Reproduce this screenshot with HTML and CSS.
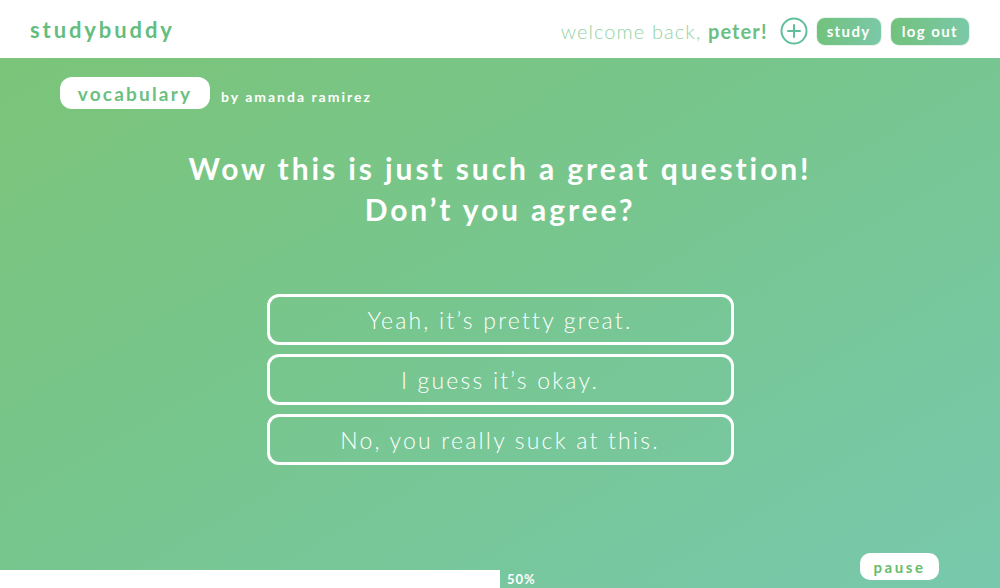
FILE: index.html
```html
<!DOCTYPE html>
<html>
<head>
<meta charset="utf-8">
<link rel="stylesheet" href="styles.css">
</head>
<body>
<header class="topbar">
  <div class="logo">studybuddy</div>
  <nav class="nav">
    <span class="welcome">welcome back, <b>peter!</b></span>
    <span class="plus">
      <svg width="28" height="28" viewBox="0 0 28 28"><circle cx="14" cy="14" r="12.5" fill="none" stroke="#5fbf9b" stroke-width="2"/><path d="M14 8v12M8 14h12" stroke="#5fbf9b" stroke-width="2" stroke-linecap="round"/></svg>
    </span>
    <span class="btn">study</span>
    <span class="btn">log out</span>
  </nav>
</header>
<main class="stage">
  <div class="meta">
    <span class="deck">vocabulary</span>
    <span class="author">by amanda ramirez</span>
  </div>
  <h1 class="question">Wow this is just such a great question!<br>Don’t you agree?</h1>
  <div class="answers">
    <div class="answer">Yeah, it’s pretty great.</div>
    <div class="answer">I guess it’s okay.</div>
    <div class="answer">No, you really suck at this.</div>
  </div>
  <div class="progress">
    <div class="bar" style="width:500px"></div>
    <span class="pct">50%</span>
  </div>
  <span class="pause">pause</span>
</main>
</body>
</html>
```

FILE: styles.css
```css
* { box-sizing: border-box; }
html, body { margin: 0; padding: 0; }
body {
  width: 1000px;
  height: 588px;
  overflow: hidden;
  font-family: "Lato", "Open Sans", sans-serif;
}
.topbar {
  height: 58px;
  background: #fff;
  display: flex;
  align-items: center;
  justify-content: space-between;
  padding: 4px 30px 0 30px;
}
.logo {
  font-size: 22px;
  font-weight: 700;
  color: #64bd80;
  letter-spacing: 2.9px;
  margin-top: -3px;
}
.nav {
  display: flex;
  align-items: center;
}
.welcome {
  font-size: 20px;
  font-weight: 300;
  color: #92d3a3;
  letter-spacing: 1.1px;
  margin-right: 12px;
}
.welcome b {
  font-weight: 700;
  color: #6bbf82;
}
.plus {
  display: flex;
  margin-right: 0;
}
.btn {
  height: 29px;
  padding: 0 10px;
  border-radius: 9px;
  background: linear-gradient(90deg, #72c27c, #7bc8a8);
  color: #fff;
  font-size: 15px;
  font-weight: 700;
  letter-spacing: 1.4px;
  display: flex;
  align-items: center;
  margin-left: 8px;
  border: 1px solid #e6f4ec;
}
.btn + .btn {
  padding: 0 11px;
}
.stage {
  position: relative;
  height: 530px;
  background: linear-gradient(150deg, #7bc479 0%, #77c68e 45%, #78c8ad 100%);
  display: flex;
  flex-direction: column;
}
.meta {
  display: flex;
  align-items: center;
  margin: 19px 0 0 60px;
}
.deck {
  background: #fff;
  border-radius: 12px;
  height: 32px;
  width: 150px;
  display: flex;
  align-items: center;
  justify-content: center;
  color: #6bbf80;
  font-size: 19px;
  font-weight: 700;
  letter-spacing: 2.2px;
}
.author {
  color: #fff;
  font-size: 14px;
  font-weight: 700;
  letter-spacing: 2px;
  margin-left: 11px;
  margin-top: 6px;
}
.question {
  margin: 39px 0 0 0;
  text-align: center;
  color: #fff;
  font-size: 30px;
  font-weight: 700;
  line-height: 41px;
  letter-spacing: 2.9px;
}
.answers {
  display: flex;
  flex-direction: column;
  align-items: center;
  gap: 9px;
  margin-top: 64px;
}
.answer {
  width: 467px;
  height: 51px;
  border: 3px solid #fff;
  border-radius: 12px;
  display: flex;
  align-items: center;
  justify-content: center;
  color: #fff;
  font-size: 23px;
  font-weight: 300;
  letter-spacing: 2.2px;
}
.progress {
  margin-top: auto;
  height: 18px;
  display: flex;
  align-items: center;
}
.bar {
  height: 18px;
  background: #fff;
}
.pct {
  color: #fff;
  font-size: 13px;
  font-weight: 700;
  letter-spacing: 1px;
  margin-left: 7px;
}
.pause {
  position: absolute;
  left: 860px;
  top: 495px;
  width: 79px;
  height: 27px;
  background: #fff;
  border-radius: 10px;
  display: flex;
  align-items: center;
  justify-content: center;
  color: #66bd6e;
  font-size: 15px;
  font-weight: 700;
  letter-spacing: 2.6px;
}
```
